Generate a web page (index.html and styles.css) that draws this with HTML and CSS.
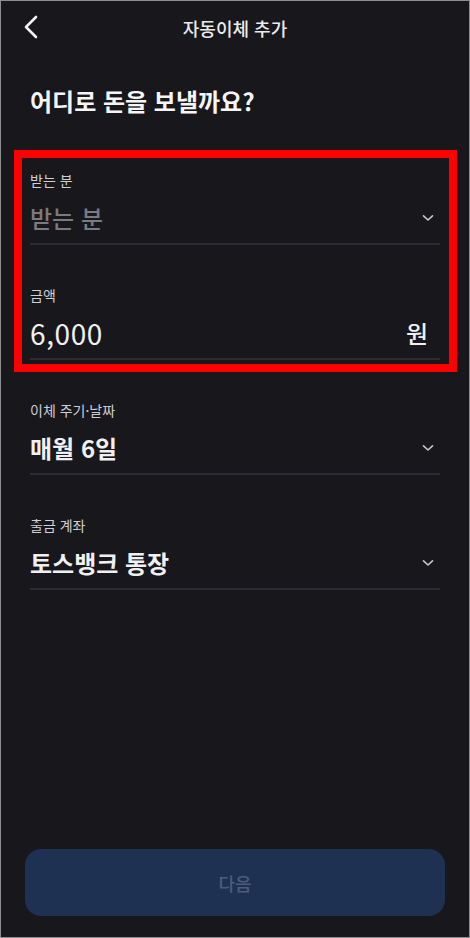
FILE: index.html
```html
<!DOCTYPE html>
<html lang="ko">
<head>
<meta charset="utf-8">
<title>자동이체 추가</title>
<link rel="stylesheet" href="styles.css">
</head>
<body>
<div class="screen">
  <header class="topbar">
    <button class="back" aria-label="뒤로">
      <svg width="16" height="24" viewBox="0 0 16 24"><path d="M13 2 L3 12 L13 22" fill="none" stroke="#f2f2f4" stroke-width="2.6" stroke-linecap="round" stroke-linejoin="round"/></svg>
    </button>
    <h1 class="title">자동이체 추가</h1>
  </header>

  <main class="content">
    <h2 class="headline">어디로 돈을 보낼까요?</h2>

    <div class="fields">
      <div class="field">
        <div class="label">받는 분</div>
        <div class="row">
          <span class="value placeholder">받는 분</span>
          <svg class="chev" width="12" height="8" viewBox="0 0 12 8"><path d="M1.5 1.8 L6 6 L10.5 1.8" fill="none" stroke="#c8c8cc" stroke-width="1.6" stroke-linecap="round" stroke-linejoin="round"/></svg>
        </div>
      </div>
      <div class="field">
        <div class="label">금액</div>
        <div class="row">
          <span class="value amount">6,000</span>
          <span class="unit">원</span>
        </div>
      </div>
      <div class="field">
        <div class="label">이체 주기·날짜</div>
        <div class="row">
          <span class="value">매월 6일</span>
          <svg class="chev" width="12" height="8" viewBox="0 0 12 8"><path d="M1.5 1.8 L6 6 L10.5 1.8" fill="none" stroke="#c8c8cc" stroke-width="1.6" stroke-linecap="round" stroke-linejoin="round"/></svg>
        </div>
      </div>
      <div class="field">
        <div class="label">출금 계좌</div>
        <div class="row">
          <span class="value">토스뱅크 통장</span>
          <svg class="chev" width="12" height="8" viewBox="0 0 12 8"><path d="M1.5 1.8 L6 6 L10.5 1.8" fill="none" stroke="#c8c8cc" stroke-width="1.6" stroke-linecap="round" stroke-linejoin="round"/></svg>
        </div>
      </div>
    </div>
  </main>

  <div class="footer">
    <button class="next" disabled>다음</button>
  </div>

  <div class="highlight"></div>
</div>
</body>
</html>
```

FILE: styles.css
```css
* { box-sizing: border-box; }
html, body { margin: 0; padding: 0; background: #17171c; }
body {
  font-family: "Noto Sans CJK KR", "Noto Sans", sans-serif;
  color: #f0f0f2;
}
.screen {
  position: relative;
  width: 470px;
  height: 938px;
  border: 1px solid #8e8e8e;
  background: #17171c;
  display: flex;
  flex-direction: column;
}
.topbar {
  position: relative;
  height: 53px;
  display: flex;
  align-items: center;
  justify-content: center;
}
.back {
  position: absolute;
  left: 22px;
  top: 13px;
  background: none;
  border: 0;
  padding: 0;
  width: 20px;
  height: 26px;
  display: flex;
  align-items: center;
}
.title {
  margin: 0;
  font-size: 18px;
  font-weight: 500;
  color: #ececee;
  line-height: 26px;
}
.content {
  padding: 0 29px;
}
.headline {
  margin: 30px 0 0;
  font-size: 24px;
  line-height: 34px;
  font-weight: 700;
  color: #f5f5f7;
}
.fields {
  margin-top: 52px;
  display: flex;
  flex-direction: column;
  gap: 40px;
}
.field {
  border-bottom: 2px solid #2c2c33;
  padding-bottom: 8px;
}
.label {
  font-size: 14px;
  line-height: 20px;
  color: #d0d0d4;
}
.row {
  margin-top: 11px;
  height: 34px;
  display: flex;
  align-items: center;
  justify-content: space-between;
  padding-right: 6px;
}
.value {
  font-size: 24px;
  line-height: 34px;
  font-weight: 700;
  color: #f0f0f2;
}
.value.placeholder {
  color: #7a7a81;
  font-weight: 500;
}
.value.amount {
  font-size: 28px;
  font-weight: 400;
  letter-spacing: 0.6px;
}
.unit {
  font-size: 24px;
  line-height: 34px;
  font-weight: 500;
  color: #f0f0f2;
  margin-right: 6px;
}
.chev { display: block; }
.footer {
  margin-top: auto;
  padding: 0 24px 21px;
}
.next {
  width: 100%;
  height: 67px;
  border: 0;
  border-radius: 16px;
  background: #1e3152;
  color: #4a5d7e;
  font-family: inherit;
  font-size: 18px;
  font-weight: 500;
}
.highlight {
  position: absolute;
  left: 13px;
  top: 149px;
  width: 443px;
  height: 222px;
  border: 8px solid #ff0000;
  pointer-events: none;
}
```
